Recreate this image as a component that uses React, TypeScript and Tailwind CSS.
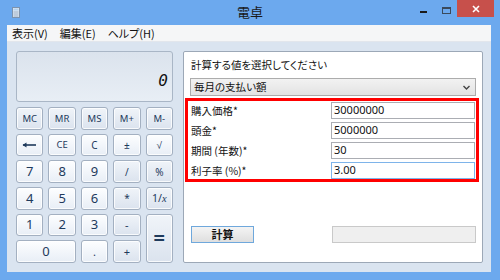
const jp = "font-['Noto_Sans_CJK_JP',sans-serif] [font-feature-settings:'palt']"

type Key = { label: React.ReactNode; kind?: "op" | "num"; span?: string; size?: string }

function BackArrow() {
  return (
    <svg width="15" height="6" viewBox="0 0 15 6">
      <path d="M1 3 H14" stroke="#1e3a5c" strokeWidth="1.6" />
      <path d="M0.5 3 L4.5 0.5 L4.5 5.5 Z" fill="#1e3a5c" />
    </svg>
  )
}

const keys: Key[] = [
  { label: "MC", kind: "op", size: "text-[9.5px]" },
  { label: "MR", kind: "op", size: "text-[9.5px]" },
  { label: "MS", kind: "op", size: "text-[9.5px]" },
  { label: "M+", kind: "op", size: "text-[9.5px]" },
  { label: "M-", kind: "op", size: "text-[9.5px]" },
  { label: <BackArrow />, size: "text-[10px]" },
  { label: "CE", size: "text-[9.5px]" },
  { label: "C", size: "text-[10px]" },
  { label: "±", size: "text-[10px]" },
  { label: "√", size: "text-[10px]" },
  { label: "7", kind: "num" },
  { label: "8", kind: "num" },
  { label: "9", kind: "num" },
  { label: "/", kind: "op", size: "text-[10px]" },
  { label: "%", kind: "op", size: "text-[10px]" },
  { label: "4", kind: "num" },
  { label: "5", kind: "num" },
  { label: "6", kind: "num" },
  { label: "*", kind: "op", size: "text-[10px]" },
  { label: <span>1/<i className="font-['Liberation_Serif',serif]">x</i></span>, kind: "op", size: "text-[10.5px]" },
  { label: "1", kind: "num" },
  { label: "2", kind: "num" },
  { label: "3", kind: "num" },
  { label: "-", kind: "op", size: "text-[11px]" },
  { label: "=", kind: "op", span: "row-span-2", size: "text-[20px] font-bold" },
  { label: "0", kind: "num", span: "col-span-2" },
  { label: ".", kind: "num", size: "text-[11px]" },
  { label: "+", kind: "op", size: "text-[11px]" },
]

function CalcKey({ k }: { k: Key }) {
  const bg =
    k.kind === "op"
      ? "bg-gradient-to-b from-[#f0f4f9] to-[#dbe3ee]"
      : "bg-gradient-to-b from-[#fdfeff] to-[#e8eef6]"
  return (
    <div
      className={`${k.span ?? ""} ${bg} ${k.size ?? "text-[13px]"} flex items-center justify-center rounded-[3px] border border-[#a3b0c1] text-[#1e3a5c] shadow-[inset_0_0_0_1px_rgba(255,255,255,0.8)] font-['Noto_Sans',sans-serif] leading-none`}
    >
      {k.label}
    </div>
  )
}

const fields = [
  { label: "購入価格*", value: "30000000" },
  { label: "頭金*", value: "5000000" },
  { label: "期間 (年数)*", value: "30" },
  { label: "利子率 (%)*", value: "3.00", focus: true },
]

export default function App() {
  return (
    <div className={`w-[500px] h-[280px] bg-[#6ca9ee] flex flex-col ${jp}`}>
      {/* title bar */}
      <div className="h-[25px] grid grid-cols-[1fr_auto_1fr]">
        <div className="pl-[12px] pt-[7px]">
          <svg width="8" height="11" viewBox="0 0 8 11">
            <rect x="0.5" y="0.5" width="7" height="10" fill="#dfe9f3" stroke="#7d93ad" />
            <rect x="1.5" y="1.5" width="5" height="2" fill="#b6d3ef" />
            <path d="M1.5 5 H6.5 M1.5 7 H6.5 M1.5 9 H6.5" stroke="#8aa0b8" strokeWidth="0.8" />
          </svg>
        </div>
        <div className="pt-[4px] text-[13px] leading-[16px] text-[#1a1a1a]">電卓</div>
        <div className="flex justify-end items-start pr-[6px]">
          <div className="mt-[11px] w-[7px] h-[2px] bg-[#1a1a1a]" />
          <div className="ml-[15px] mt-[7px] w-[9px] h-[7px] border border-[#3a4a5c] border-t-2" />
          <div className="ml-[6px] w-[37px] h-[17px] bg-[#c7504b] flex items-center justify-center">
            <svg width="8" height="8" viewBox="0 0 8 8">
              <path d="M1 1 L7 7 M7 1 L1 7" stroke="#fff" strokeWidth="1.6" />
            </svg>
          </div>
        </div>
      </div>

      {/* client area */}
      <div className="flex-1 ml-[7px] mr-[9px] mb-[8px] flex flex-col">
        <div className="h-[17px] bg-[#f5f6f7] border-b border-[#e2e6ec] flex items-center text-[11px] text-[#111] gap-[12px] pl-[5px]">
          <span>表示(V)</span>
          <span>編集(E)</span>
          <span>ヘルプ(H)</span>
        </div>

        <div className="flex-1 bg-[#dae4f0] flex gap-[10px] pl-[9px] pr-[8px] pt-[9px] pb-[9px]">
          {/* calculator */}
          <div className="w-[157px] flex flex-col gap-[5px]">
            <div className="h-[51px] rounded-[3px] border border-[#a9b6c6] bg-gradient-to-b from-[#dbe3ed] to-[#e8eef5] flex items-center justify-end pr-[4px] pt-[8px]">
              <span className="font-['DejaVu_Sans_Mono',monospace] text-[16px] italic text-[#111]">0</span>
            </div>
            <div className="h-[156px] grid grid-cols-5 grid-rows-6 gap-x-[5px] gap-y-[4px]">
              {keys.map((k, i) => (
                <CalcKey key={i} k={k} />
              ))}
            </div>
          </div>

          {/* mortgage panel */}
          <div className="flex-1 bg-white border border-[#9ca8b7] rounded-[2px] flex flex-col px-[6px] pt-[6px] text-[10.5px] text-[#111]">
            <div className="h-[14px] leading-[14px] pl-[1px]">計算する値を選択してください</div>
            <div className="mt-[6px] h-[18px] border border-[#acacac] bg-gradient-to-b from-[#f2f2f2] to-[#e3e3e3] flex items-center justify-between pl-[3px] pr-[5px]">
              <span>毎月の支払い額</span>
              <svg width="7" height="5" viewBox="0 0 7 5">
                <path d="M0.5 1 L3.5 4 L6.5 1" stroke="#444" strokeWidth="1.4" fill="none" />
              </svg>
            </div>

            <div className="mt-[2px] -ml-[5px] -mr-[3px] border-[3px] border-[#ff0000] flex flex-col gap-[3px] pt-[1px] pr-[1px]">
              {fields.map((f) => (
                <div key={f.label} className="h-[17px] flex items-center">
                  <span className="flex-1 pl-[3px]">{f.label}</span>
                  <div
                    className={`w-[144px] h-[17px] border ${f.focus ? "border-[#7eb4ea]" : "border-[#abadb3]"} flex items-center pl-[2px] font-['Noto_Sans',sans-serif] text-[11px]`}
                  >
                    {f.value}
                  </div>
                </div>
              ))}
            </div>

            <div className="mt-[44px] flex justify-between">
              <div className="w-[63px] h-[17px] ml-[1px] border border-[#6fa8dc] bg-gradient-to-b from-[#f4f4f4] to-[#dfdfdf] flex items-center justify-center font-bold text-[11px]">
                計算
              </div>
              <div className="w-[144px] h-[17px] border border-[#c9c9c9] bg-[#efefef]" />
            </div>
          </div>
        </div>
      </div>
    </div>
  )
}
